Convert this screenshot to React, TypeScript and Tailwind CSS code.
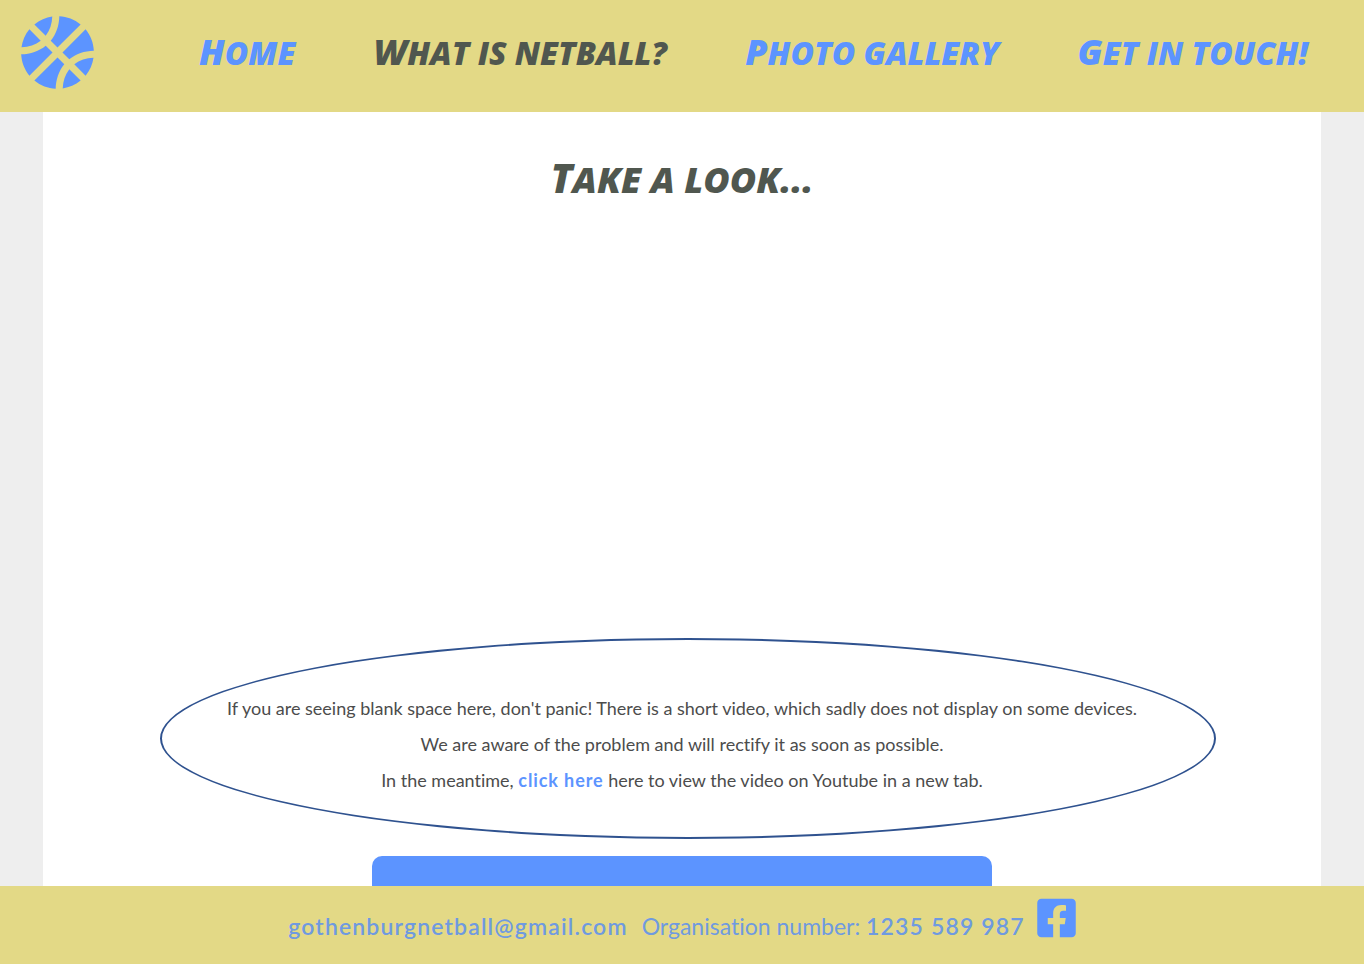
import { FaBasketballBall, FaFacebookSquare } from "react-icons/fa";

const links = [
  { label: "Home", href: "#home", active: false },
  { label: "What is netball?", href: "#netball", active: true },
  { label: "Photo gallery", href: "#gallery", active: false },
  { label: "Get in touch!", href: "#contact", active: false },
];

function Header() {
  return (
    <header className="flex h-28 shrink-0 items-start bg-[#e3d986] pt-[15px] pr-14 pl-5 text-[#5c94ff]">
      <a href="#home" aria-label="Gothenburg Netball">
        <FaBasketballBall className="size-[75px]" />
      </a>
      <nav className="ml-[104px] flex-1 pt-[13px]">
        <ul className="flex justify-between font-['Permanent_Marker','Open_Sans',sans-serif] text-[32px] leading-[48px] font-extrabold whitespace-nowrap uppercase italic">
          {links.map((link) => (
            <li key={link.label} className="first-letter:text-[36px]">
              <a href={link.href} className={link.active ? "text-[#50574f]" : "text-[#5c94ff]"}>
                {link.label}
              </a>
            </li>
          ))}
        </ul>
      </nav>
    </header>
  );
}

function Footer() {
  return (
    <footer className="flex h-[78px] shrink-0 items-start justify-center bg-[#e3d986] pt-[10px] text-[23px] leading-8 whitespace-nowrap text-[#6f9ae0] [font-variant-ligatures:none]">
      <a href="mailto:gothenburgnetball@gmail.com" className="mt-[14px] mr-3.5 font-semibold tracking-wider">
        gothenburgnetball@gmail.com
      </a>
      <p className="mt-[14px]">
        Organisation number: <strong className="font-semibold tracking-wider">1235 589 987</strong>
      </p>
      <a href="#facebook" aria-label="Facebook" className="ml-3 text-[#5c94ff]">
        <FaFacebookSquare className="h-11 w-[39px]" />
      </a>
    </footer>
  );
}

export default function App() {
  return (
    <div className="flex h-screen flex-col bg-[#eeeeee] font-['Lato',sans-serif]">
      <Header />
      <main className="mx-[43px] flex min-h-0 flex-1 flex-col items-center overflow-hidden bg-white pt-[42px] text-[#4c4c4c]">
        <h1 className="h-12 shrink-0 font-['Permanent_Marker','Open_Sans',sans-serif] text-[36px] leading-[48px] font-extrabold text-[#50574f] uppercase italic first-letter:text-[40px]">
          Take a look...
        </h1>
        <div className="h-[436px] w-full shrink-0" />
        <div className="relative flex h-[201px] w-full shrink-0 items-center justify-center">
          <div className="absolute inset-y-0 right-[105px] left-[117px] rounded-[50%] border-2 border-[#2f528f]" />
          <p className="relative pt-[10px] text-center text-[18px] leading-9 [font-variant-ligatures:none]">
            If you are seeing blank space here, don't panic! There is a short video, which sadly does not display on some devices.
            <br />
            We are aware of the problem and will rectify it as soon as possible.
            <br />
            In the meantime,{" "}
            <a href="#video" className="font-bold tracking-wider text-[#5c94ff]">
              click here
            </a>{" "}
            here to view the video on Youtube in a new tab.
          </p>
        </div>
        <section className="mt-[17px] h-80 w-[620px] shrink-0 rounded-[10px] bg-[#5c94ff]" />
      </main>
      <Footer />
    </div>
  );
}
